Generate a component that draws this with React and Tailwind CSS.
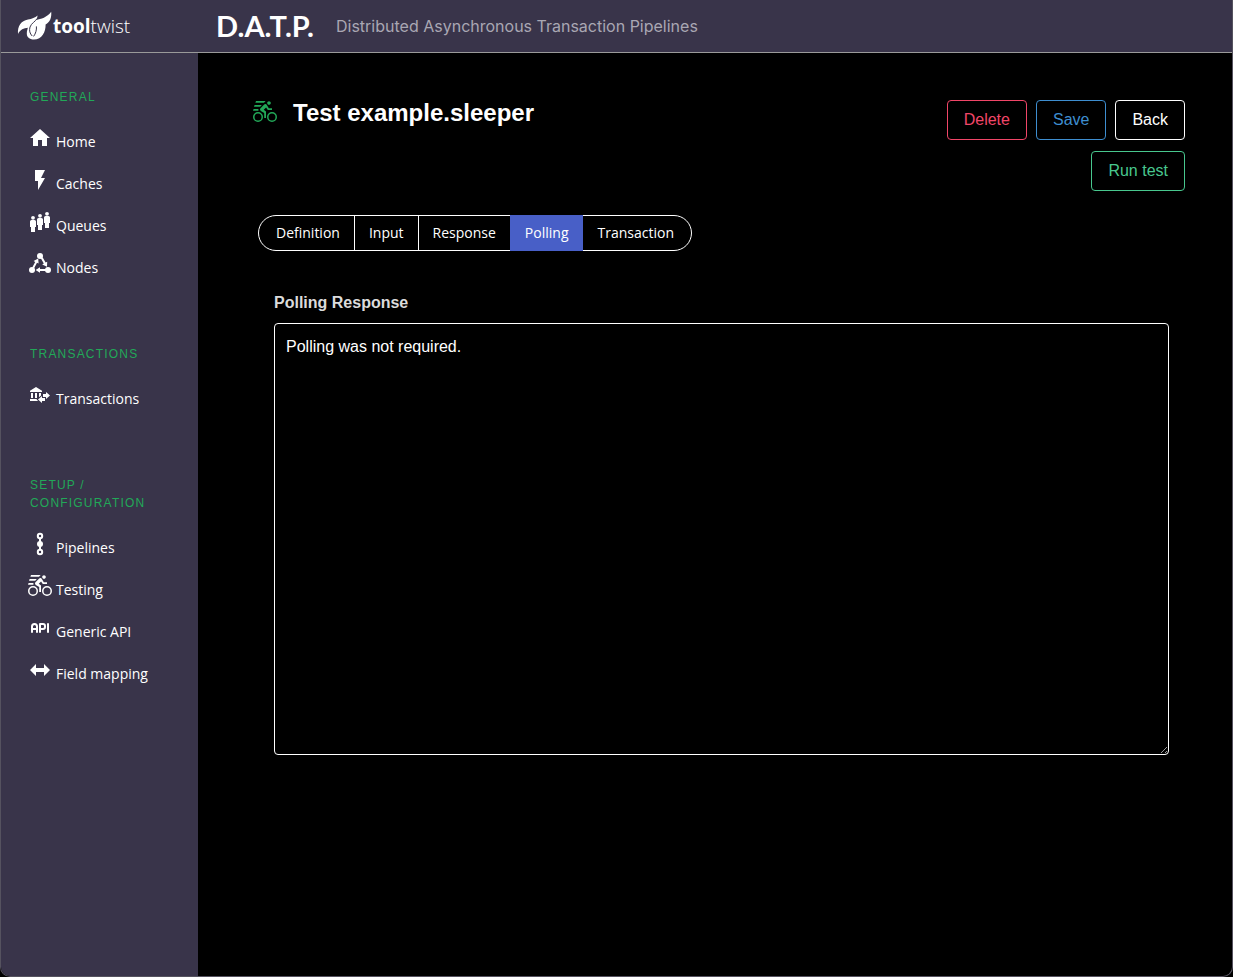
import { TbApi } from "react-icons/tb";

const Icon = ({ children, className = "" }) => (
  <svg
    viewBox="0 0 24 24"
    className={`w-6 h-6 shrink-0 fill-current ${className}`}
    aria-hidden="true"
  >
    {children}
  </svg>
);

const HomeIcon = () => (
  <Icon>
    <path d="M10,20V14H14V20H19V12H22L12,3L2,12H5V20H10Z" />
  </Icon>
);

const FlashIcon = () => (
  <Icon>
    <path d="M7,2V13H10V22L17,10H13L17,2H7Z" />
  </Icon>
);

const QueueIcon = () => (
  <Icon>
    <circle cx="5" cy="7.8" r="1.9" />
    <path d="M3.5,10H6.5A1.5,1.5 0 0,1 8,11.5V17H7V22H3V17H2V11.5A1.5,1.5 0 0,1 3.5,10Z" />
    <circle cx="12" cy="5.8" r="1.9" />
    <path d="M10.5,8H13.5A1.5,1.5 0 0,1 15,9.5V15H14V20H10V15H9V9.5A1.5,1.5 0 0,1 10.5,8Z" />
    <circle cx="19" cy="3.8" r="1.9" />
    <path d="M17.5,6H20.5A1.5,1.5 0 0,1 22,7.5V13H21V18H17V13H16V7.5A1.5,1.5 0 0,1 17.5,6Z" />
  </Icon>
);

const NodesIcon = () => (
  <Icon>
    <circle cx="12" cy="4" r="3" />
    <circle cx="4" cy="18" r="3" />
    <circle cx="20" cy="18" r="3" />
    <path d="M4.2,15.4L7.2,9.9L5.6,9L10.2,6.6L10.6,11.6L9,10.8L6,16.4Z" />
    <path d="M12.8,6.2L15.8,11.5L14.2,12.4L19,14.8L19.2,9.8L17.6,10.6L14.6,5.2Z" />
    <path d="M18,17H12V15.2L7.6,18L12,20.8V19H18Z" />
  </Icon>
);

const BankTransferIcon = () => (
  <Icon>
    <path d="M15,14V11H18V9L22,12.5L18,16V14H15M14,7.7V9H2V7.7L8,4L14,7.7M7,10H9V15H7V10M3,10H5V15H3V10M13,10V12.5L11,14.3V10H13M9.1,16L8.5,16.5L10.2,18H2V16H9.1M17,15V18H14V20L10,16.5L14,13V15H17Z" />
  </Icon>
);

const PipelineIcon = () => (
  <Icon>
    <circle cx="12" cy="4" r="2.2" className="fill-none stroke-current stroke-2" />
    <circle cx="12" cy="12" r="3" />
    <circle cx="12" cy="20" r="2.2" className="fill-none stroke-current stroke-2" />
    <path d="M11,6H13V18H11Z" />
  </Icon>
);

const BikeIcon = ({ className }) => (
  <Icon className={className}>
    <path d="M5,20.5A3.5,3.5 0 0,1 1.5,17A3.5,3.5 0 0,1 5,13.5A3.5,3.5 0 0,1 8.5,17A3.5,3.5 0 0,1 5,20.5M5,12A5,5 0 0,0 0,17A5,5 0 0,0 5,22A5,5 0 0,0 10,17A5,5 0 0,0 5,12M14.8,10H19V8.2H15.8L13.86,4.93C13.57,4.43 13,4.1 12.4,4.1C11.93,4.1 11.5,4.29 11.2,4.6L7.5,8.29C7.19,8.6 7,9 7,9.5C7,10.13 7.33,10.66 7.85,10.97L11.2,13V18H13V11.5L10.75,9.85L13.07,7.5M19,20.5A3.5,3.5 0 0,1 15.5,17A3.5,3.5 0 0,1 19,13.5A3.5,3.5 0 0,1 22.5,17A3.5,3.5 0 0,1 19,20.5M19,12A5,5 0 0,0 14,17A5,5 0 0,0 19,22A5,5 0 0,0 24,17A5,5 0 0,0 19,12M16,4.8C17,4.8 17.8,4 17.8,3C17.8,2 17,1.2 16,1.2C15,1.2 14.2,2 14.2,3C14.2,4 15,4.8 16,4.8Z" />
    <path d="M3,1H12.6L11,2.7H2.4ZM1.6,5H8.8L7.2,6.7H1ZM0.6,9H5.4V10.7H0Z" />
  </Icon>
);

const ApiIcon = () => <TbApi className="w-6 h-6 shrink-0" aria-hidden="true" />;

const ArrowsIcon = () => (
  <Icon>
    <path d="M8,6V10H16V6L22,12L16,18V14H8V18L2,12Z" />
  </Icon>
);

const menu = [
  {
    label: "General",
    items: [
      { name: "Home", icon: HomeIcon },
      { name: "Caches", icon: FlashIcon },
      { name: "Queues", icon: QueueIcon },
      { name: "Nodes", icon: NodesIcon },
    ],
  },
  {
    label: "Transactions",
    items: [{ name: "Transactions", icon: BankTransferIcon }],
  },
  {
    label: "Setup / Configuration",
    items: [
      { name: "Pipelines", icon: PipelineIcon },
      { name: "Testing", icon: BikeIcon },
      { name: "Generic API", icon: ApiIcon },
      { name: "Field mapping", icon: ArrowsIcon },
    ],
  },
];

const tabs = ["Definition", "Input", "Response", "Polling", "Transaction"];

const buttonVariants = {
  danger: "border-[#f14668] text-[#f14668]",
  link: "border-[#3e8ed0] text-[#3e8ed0]",
  plain: "border-white text-white",
  success: "border-[#48c78e] text-[#48c78e]",
};

const Button = ({ variant, children }) => (
  <button
    type="button"
    className={`h-10 px-4 text-base leading-6 border rounded cursor-pointer ${buttonVariants[variant]}`}
  >
    {children}
  </button>
);

const Logo = () => (
  <a href="#" className="flex items-center w-[197px] pl-4 text-white">
    <svg viewBox="0 0 36 30" className="w-9 h-[30px] fill-current" aria-hidden="true">
      <path d="M1,23C0.4,15 4,9.6 11,8.4C15,7.8 18,6.6 20.6,4.4C20.2,6.6 19.8,7.8 19.2,9C24,8.2 30,6.4 34.2,0.8C34.8,6.4 33,11.4 28.6,13.4C28.8,20.6 25,28.4 17,28.4C12.4,28.4 9.8,26 9.8,22.4C9.8,20 10.6,18.2 10.8,16.8C7,17 3,18.8 1,23Z" />
      <path
        d="M20,7.6C18.6,10.4 14.4,12 13,16C12,19.4 12.8,22.6 15.2,25"
        className="fill-none stroke-[#39344a] stroke-1"
      />
      <path
        d="M19.4,15.4C19.8,19 18.6,22.6 16.6,25.4"
        className="fill-none stroke-[#39344a] stroke-1"
      />
    </svg>
    <span className="font-['Open_Sans','Noto_Sans',sans-serif] text-[19px] leading-6">
      <b className="font-bold">tool</b>
      <span className="font-light">twist</span>
    </span>
  </a>
);

const Header = () => (
  <header className="flex h-[53px] border-b border-[#9a9a9a] bg-[#39344a]">
    <Logo />
    <div className="flex items-center gap-[22px] pl-[18px] pr-5">
      <span className="font-['Lato',sans-serif] text-[29px] leading-8 font-bold text-white">
        D.A.T.P.
      </span>
      <span className="font-['Inter',sans-serif] text-base leading-6 text-[#a9a7b3]">
        Distributed Asynchronous Transaction Pipelines
      </span>
    </div>
  </header>
);

const Sidebar = () => (
  <aside className="flex flex-col w-[197px] shrink-0 gap-[59px] pt-[35px] px-[29px] bg-[#39344a]">
    {menu.map((group) => (
      <nav key={group.label} aria-label={group.label}>
        <p className="mb-3 text-xs leading-[18px] tracking-widest uppercase text-[#22a858]">
          {group.label}
        </p>
        <ul className="-ml-0.5">
          {group.items.map(({ name, icon: ItemIcon }) => (
            <li key={name}>
              <a
                href="#"
                className="flex h-[42px] gap-1 pt-2 font-['Open_Sans','Noto_Sans',sans-serif] text-sm text-white whitespace-nowrap"
              >
                <ItemIcon />
                <span className="leading-8">{name}</span>
              </a>
            </li>
          ))}
        </ul>
      </nav>
    ))}
  </aside>
);

const Tabs = ({ active }) => (
  <div className="flex" role="tablist">
    {tabs.map((tab) => (
      <button
        key={tab}
        type="button"
        role="tab"
        aria-selected={tab === active}
        className={`h-9 px-[14px] -mr-px border font-['Open_Sans','Noto_Sans',sans-serif] text-sm text-white first:pl-[17px] first:rounded-l-full last:pr-[17px] last:rounded-r-full ${
          tab === active
            ? "relative z-10 border-[#485fc7] bg-[#485fc7]"
            : "border-white"
        }`}
      >
        {tab}
      </button>
    ))}
  </div>
);

const App = () => (
  <div className="min-h-screen bg-black font-['Liberation_Sans',Arial,sans-serif]">
    <div className="flex flex-col min-h-screen overflow-hidden border-x border-b rounded-b-[10px] border-[#55525f] bg-black">
      <Header />
      <div className="flex grow">
        <Sidebar />
        <main className="grow pt-[47px] pl-[55px] pr-[47px]">
          <div className="flex items-start justify-between">
            <div className="flex gap-4">
              <BikeIcon className="text-[#22a858]" />
              <h1 className="text-2xl leading-[26px] font-bold text-white">
                Test example.sleeper
              </h1>
            </div>
            <div className="flex flex-wrap justify-end w-60 gap-x-[9px] gap-y-[11px]">
              <Button variant="danger">Delete</Button>
              <Button variant="link">Save</Button>
              <Button variant="plain">Back</Button>
              <Button variant="success">Run test</Button>
            </div>
          </div>

          <div className="pt-6 pl-[5px]">
            <Tabs active="Polling" />
            <div className="pt-10 px-4">
              <label
                htmlFor="polling-response"
                className="block mb-2 text-base leading-6 font-bold text-[#dbdbdb]"
              >
                Polling Response
              </label>
              <textarea
                id="polling-response"
                readOnly
                defaultValue="Polling was not required."
                className="block w-full h-[432px] px-[11px] py-[11px] text-base leading-6 text-white bg-black border border-white rounded resize-y"
              />
            </div>
          </div>
        </main>
      </div>
    </div>
  </div>
);

export default App;
